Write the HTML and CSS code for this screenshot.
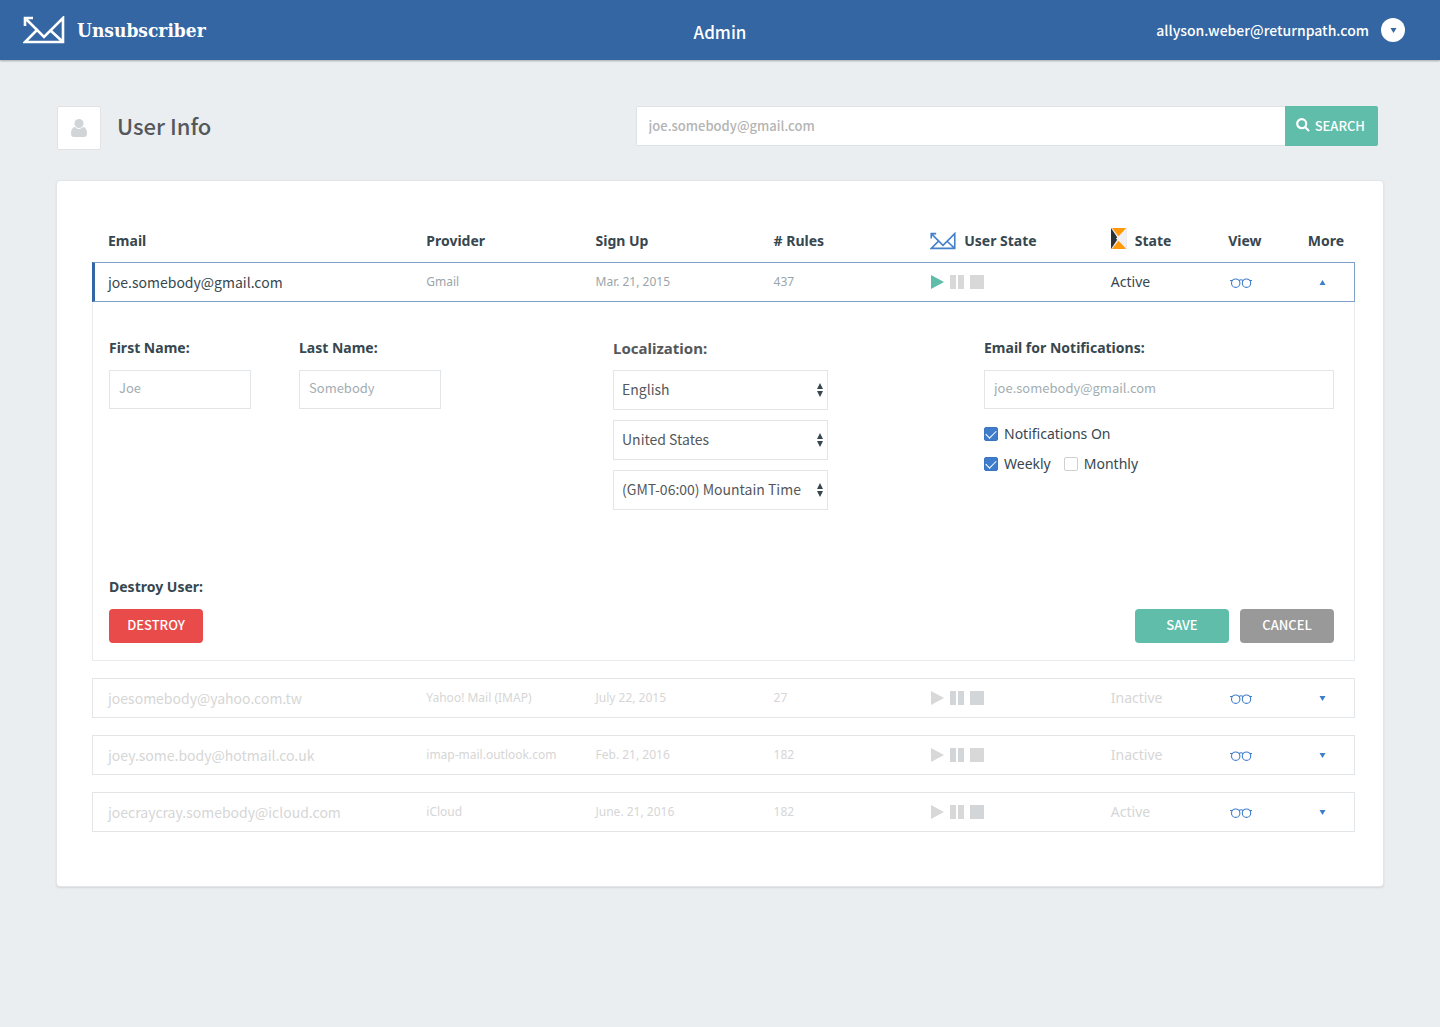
FILE: index.html
```html
<!DOCTYPE html>
<html lang="en">
  <head>
    <meta charset="utf-8">
    <title>Unsubscriber Admin</title>
    <meta name="viewport" content="width=device-width, initial-scale=1">
    <link rel="stylesheet" href="styles.css">
  </head>

  <body>
    <!-- shared icons -->
    <svg class="sprite" aria-hidden="true">
      <symbol id="logo" viewBox="0 0 42 28">
        <path d="M2 10V2h8M2 2l19 19L40 2v24H2l13-13M27 14l13 12" fill="none" stroke="currentColor" stroke-width="2.6"/>
      </symbol>
      <symbol id="play" viewBox="0 0 14 14"><path d="M1 0l13 7-13 7z"/></symbol>
      <symbol id="pause" viewBox="0 0 14 14"><path d="M0 0h6v14H0zM8 0h6v14H8z"/></symbol>
      <symbol id="stop" viewBox="0 0 14 14"><path d="M0 0h14v14H0z"/></symbol>
      <symbol id="glasses" viewBox="0 0 22 10">
        <g fill="none" stroke="currentColor" stroke-width="1.1">
          <circle cx="5.7" cy="5.2" r="4.2"/>
          <circle cx="16.5" cy="5.2" r="4.2"/>
          <path d="M0 2.500h2.500M19.700 2.500H22M9 2.600q2-1.600 4.200 0"/>
        </g>
      </symbol>
      <symbol id="down" viewBox="0 0 6 5"><path d="M0 0h6L3 5z"/></symbol>
      <symbol id="up" viewBox="0 0 6 5"><path d="M0 5h6L3 0z"/></symbol>
      <symbol id="updown" viewBox="0 0 6 14"><path d="M0 6h6L3 0zM0 8h6l-3 6z"/></symbol>
    </svg>

    <header class="topbar">
      <a class="brand" href="#">
        <svg class="brand-logo"><use href="#logo"/></svg>
        <span>Unsubscriber</span>
      </a>
      <div class="topbar-title">Admin</div>
      <div class="account">
        <span>allyson.weber@returnpath.com</span>
        <button class="account-btn" type="button" aria-label="Account menu"><svg class="caret"><use href="#down"/></svg></button>
      </div>
    </header>

    <main class="page">
      <div class="page-head">
        <div class="avatar">
          <svg width="16" height="18" viewBox="0 0 16 18">
            <path d="M4 8q4 4 8 0 4 .5 4 6.500 0 3.500-3 3.500H3q-3 0-3-3.500Q0 8.500 4 8z"/>
            <circle cx="8" cy="4.5" r="4.5"/>
          </svg>
        </div>
        <h1>User Info</h1>
        <form class="search">
          <input type="search" aria-label="Search users" placeholder="joe.somebody@gmail.com">
          <button type="button">
            <svg width="14" height="14" viewBox="0 0 14 14"><g fill="none" stroke="currentColor" stroke-width="2.2"><circle cx="5.7" cy="5.7" r="4.5"/><path d="M9 9l4 4"/></g></svg>
            <span>SEARCH</span>
          </button>
        </form>
      </div>

      <section class="card">
        <table class="users">
          <colgroup>
            <col class="c-email"><col class="c-provider"><col class="c-signup"><col class="c-rules">
            <col class="c-ustate"><col class="c-state"><col class="c-view"><col class="c-more">
          </colgroup>
          <thead>
            <tr>
              <th>Email</th>
              <th>Provider</th>
              <th>Sign Up</th>
              <th># Rules</th>
              <th><span class="th-icon"><svg class="mini-logo"><use href="#logo"/></svg>User State</span></th>
              <th><span class="th-icon"><svg class="k-logo" viewBox="0 0 16 21">
                <path fill="#ecebed" d="M0 0h16v21H0z"/>
                <path fill="#ff9a0c" d="M1 0h14L8 9zM1 21h14l-7-9z"/>
                <path fill="#2b3236" d="M0 0l7 10.500L0 21z"/>
                <path fill="#f1f1f3" d="M15 1v19L5 10.500z"/>
              </svg>State</span></th>
              <th>View</th>
              <th>More</th>
            </tr>
          </thead>
          <tbody>
            <tr class="user open">
              <td class="email">joe.somebody@gmail.com</td>
              <td>Gmail</td>
              <td>Mar. 21, 2015</td>
              <td>437</td>
              <td><div class="controls"><svg class="on"><use href="#play"/></svg><svg><use href="#pause"/></svg><svg><use href="#stop"/></svg></div></td>
              <td class="state">Active</td>
              <td><button class="icon-btn" type="button" aria-label="View"><svg class="glasses"><use href="#glasses"/></svg></button></td>
              <td class="more"><button class="icon-btn" type="button" aria-label="Less"><svg class="caret"><use href="#up"/></svg></button></td>
            </tr>
            <tr class="detail">
              <td colspan="8">
                <form>
                  <div class="fields">
                    <div class="field">
                      <label for="first">First Name:</label>
                      <input class="short" id="first" type="text" placeholder="Joe">
                    </div>
                    <div class="field">
                      <label for="last">Last Name:</label>
                      <input class="short" id="last" type="text" placeholder="Somebody">
                    </div>
                    <div class="field">
                      <label class="loc" for="lang">Localization:</label>
                      <div class="select">
                        <select id="lang"><option>English</option></select>
                        <svg><use href="#updown"/></svg>
                      </div>
                      <div class="select">
                        <select aria-label="Country"><option>United States</option></select>
                        <svg><use href="#updown"/></svg>
                      </div>
                      <div class="select">
                        <select aria-label="Time zone"><option>(GMT-06:00) Mountain Time</option></select>
                        <svg><use href="#updown"/></svg>
                      </div>
                    </div>
                    <div class="field">
                      <label for="notify">Email for Notifications:</label>
                      <input id="notify" type="email" placeholder="joe.somebody@gmail.com">
                      <div class="checks">
                        <label class="check"><input type="checkbox" checked>Notifications On</label>
                      </div>
                      <div class="checks">
                        <label class="check"><input type="checkbox" checked>Weekly</label>
                        <label class="check"><input type="checkbox">Monthly</label>
                      </div>
                    </div>
                  </div>
                  <div class="actions">
                    <div class="destroy">
                      <h2>Destroy User:</h2>
                      <button class="btn red" type="button">DESTROY</button>
                    </div>
                    <button class="btn green" type="button">SAVE</button>
                    <button class="btn grey" type="button">CANCEL</button>
                  </div>
                </form>
              </td>
            </tr>
            <tr class="gap"><td colspan="8"></td></tr>
            <tr class="user">
              <td class="email">joesomebody@yahoo.com.tw</td>
              <td>Yahoo! Mail (IMAP)</td>
              <td>July 22, 2015</td>
              <td>27</td>
              <td><div class="controls"><svg><use href="#play"/></svg><svg class="cool"><use href="#pause"/></svg><svg class="cool"><use href="#stop"/></svg></div></td>
              <td class="state">Inactive</td>
              <td><button class="icon-btn" type="button" aria-label="View"><svg class="glasses"><use href="#glasses"/></svg></button></td>
              <td class="more"><button class="icon-btn" type="button" aria-label="More"><svg class="caret"><use href="#down"/></svg></button></td>
            </tr>
            <tr class="gap"><td colspan="8"></td></tr>
            <tr class="user">
              <td class="email">joey.some.body@hotmail.co.uk</td>
              <td>imap-mail.outlook.com</td>
              <td>Feb. 21, 2016</td>
              <td>182</td>
              <td><div class="controls"><svg><use href="#play"/></svg><svg class="cool"><use href="#pause"/></svg><svg><use href="#stop"/></svg></div></td>
              <td class="state">Inactive</td>
              <td><button class="icon-btn" type="button" aria-label="View"><svg class="glasses"><use href="#glasses"/></svg></button></td>
              <td class="more"><button class="icon-btn" type="button" aria-label="More"><svg class="caret"><use href="#down"/></svg></button></td>
            </tr>
            <tr class="gap"><td colspan="8"></td></tr>
            <tr class="user">
              <td class="email">joecraycray.somebody@icloud.com</td>
              <td>iCloud</td>
              <td>June. 21, 2016</td>
              <td>182</td>
              <td><div class="controls"><svg><use href="#play"/></svg><svg><use href="#pause"/></svg><svg class="cool"><use href="#stop"/></svg></div></td>
              <td class="state">Active</td>
              <td><button class="icon-btn" type="button" aria-label="View"><svg class="glasses"><use href="#glasses"/></svg></button></td>
              <td class="more"><button class="icon-btn" type="button" aria-label="More"><svg class="caret"><use href="#down"/></svg></button></td>
            </tr>
          </tbody>
        </table>
      </section>
    </main>
  </body>
</html>
```

FILE: styles.css
```css
* {
  box-sizing: border-box;
}

body {
  margin: 0;
  background: #eaeef1;
  color: #37474f;
  font-family: "Noto Sans", sans-serif;
  font-size: 14px;
  line-height: 20px;
}

button, input, select {
  font-family: "Noto Sans CJK SC", sans-serif;
  margin: 0;
}

button {
  border: none;
  cursor: pointer;
}

.sprite {
  display: none;
}

/* ---------- Top bar */
.topbar {
  display: grid;
  grid-template-columns: 1fr auto 1fr;
  align-items: center;
  height: 60px;
  padding: 0 35px 0 23px;
  background: #3366a2;
  box-shadow: 0 1px 2px rgba(0, 0, 0, 0.3);
  color: #fff;
  font-family: "Noto Sans CJK SC", sans-serif;
  font-weight: 500;
}

.brand {
  display: flex;
  align-items: center;
  gap: 12px;
  color: #fff;
  font-family: "DejaVu Serif Condensed", "DejaVu Serif", serif;
  font-size: 19px;
  font-weight: bold;
  text-decoration: none;
}

.brand-logo {
  width: 42px;
  height: 28px;
}

.topbar-title {
  padding: 4px 0 0 12px;
  font-size: 17px;
}

.account {
  display: flex;
  justify-content: flex-end;
  align-items: center;
  gap: 12px;
}

.account-btn {
  display: flex;
  justify-content: center;
  align-items: center;
  width: 24px;
  height: 24px;
  padding: 0;
  border-radius: 50%;
  background: #fff;
  color: #3366a2;
}

.caret {
  width: 7px;
  height: 5px;
  fill: currentColor;
}

/* ---------- Page head */
.page {
  padding: 46px 56px 56px;
}

.page-head {
  display: flex;
  align-items: flex-start;
  padding: 0 6px 0 1px;
  margin-bottom: 30px;
}

.avatar {
  display: flex;
  justify-content: center;
  align-items: center;
  width: 44px;
  height: 44px;
  border: 1px solid #dfe3e6;
  border-radius: 2px;
  background: #fff;
  fill: #d1d5d8;
}

h1 {
  flex: 1;
  margin: 0 0 0 16px;
  color: #54585b;
  font-family: "Noto Sans CJK SC", sans-serif;
  font-size: 22px;
  font-weight: 500;
  line-height: 38px;
}

.search {
  display: flex;
  width: 56.2%;
  height: 40px;
}

.search input {
  flex: 1;
  min-width: 0;
  padding: 0 12px 2px;
  border: 1px solid #dfe3e6;
  border-right: none;
  border-radius: 2px 0 0 2px;
  background: #fff;
  font-size: 13px;
  font-weight: 500;
  outline: none;
}

.search input::placeholder {
  color: #b4b4b4;
}

.search button {
  display: flex;
  align-items: center;
  gap: 5px;
  padding: 0 13px 2px 11px;
  border-radius: 0 2px 2px 0;
  background: #5fbdaa;
  color: #fff;
  font-size: 13px;
  font-weight: 500;
}

/* ---------- Card and table */
.card {
  padding: 47px 28px 54px 35px;
  border: 1px solid #e2e6e9;
  border-radius: 4px;
  background: #fff;
  box-shadow: 0 1px 2px rgba(0, 0, 0, 0.1);
}

.users {
  width: 100%;
  table-layout: fixed;
  border-collapse: separate;
  border-spacing: 0;
}

.c-email { width: 25.2%; }
.c-provider { width: 13.4%; }
.c-signup { width: 14.1%; }
.c-rules { width: 12.4%; }
.c-ustate { width: 14.3%; }
.c-state { width: 9.3%; }
.c-view { width: 6.3%; }
.c-more { width: 5%; }

th {
  height: 34px;
  padding: 0 0 8px 16px;
  font-weight: bold;
  text-align: left;
  white-space: nowrap;
}

.th-icon {
  display: flex;
  align-items: center;
  gap: 8px;
}

.mini-logo {
  width: 26px;
  height: 18px;
  color: #4480cc;
}

.k-logo {
  width: 16px;
  height: 21px;
  margin-bottom: 5px;
}

.user td {
  height: 40px;
  padding: 0 0 0 16px;
  border: solid #e2e6e8;
  border-width: 1px 0;
  color: #d6d6d6;
  font-size: 12px;
  white-space: nowrap;
}

.user td:first-child {
  border-left-width: 1px;
  padding-left: 15px;
}

.user td:last-child {
  border-right-width: 1px;
}

.user .email {
  font-family: "Noto Sans CJK SC", sans-serif;
  font-size: 14px;
}

.user .state {
  font-size: 14px;
}

.user .more {
  padding: 0;
  text-align: center;
}

.open td {
  border-color: #7ea0c8;
  color: #9aa5aa;
}

.open td:first-child {
  padding-left: 13px;
  border-left: 3px solid #3366a2;
}

.open .email, .open .state {
  color: #37474f;
}

.controls {
  display: flex;
  gap: 6px;
}

.controls svg {
  width: 14px;
  height: 14px;
  fill: #d8d8d8;
}

.controls .on {
  fill: #5fbdaa;
}

.controls .cool {
  fill: #d2d6d9;
}

.icon-btn {
  display: inline-block;
  padding: 2px;
  background: none;
  color: #3f7dcc;
  line-height: 0;
  vertical-align: middle;
}

.glasses {
  width: 22px;
  height: 10px;
}

.gap td {
  height: 17px;
  padding: 0;
}

/* ---------- Expanded user */
.detail td {
  padding: 36px 20px 17px 16px;
  border: 1px solid #e9ecee;
  border-top: none;
}

.fields {
  display: grid;
  grid-template-columns: 190fr 314fr 371fr 350fr;
  min-height: 239px;
}

.field > label, h2 {
  display: block;
  margin: 0 0 12px;
  font-size: 14px;
  font-weight: bold;
  line-height: 20px;
}

.field .loc {
  color: #54585b;
  font-size: 15px;
}

.field > input {
  width: 100%;
  height: 39px;
  padding: 0 9px 4px;
  border: 1px solid #e2e6e8;
  background: #fff;
  font-size: 13px;
  outline: none;
}

.field > .short {
  width: 142px;
}

.field > input::placeholder {
  color: #a3adb1;
}

.select {
  position: relative;
  width: 215px;
  margin-bottom: 10px;
}

.select select {
  display: block;
  width: 100%;
  height: 40px;
  padding: 0 8px 2px;
  border: 1px solid #e2e6e8;
  border-radius: 0;
  background: #fff;
  color: #54585b;
  font-size: 14px;
  -webkit-appearance: none;
  appearance: none;
}

.select svg {
  position: absolute;
  top: 13px;
  right: 5px;
  width: 6px;
  height: 14px;
  fill: #37474f;
  pointer-events: none;
}

.checks {
  display: flex;
  gap: 13px;
  margin-top: 10px;
}

.field .checks:first-of-type {
  margin-top: 15px;
}

.check {
  display: flex;
  align-items: center;
  gap: 6px;
}

.check input {
  display: grid;
  place-items: center;
  width: 14px;
  height: 14px;
  border: 1px solid #d0d0d0;
  border-radius: 2px;
  background: #fff;
  -webkit-appearance: none;
  appearance: none;
}

.check input:checked {
  border-color: #3a75c0;
  background: #3f7dcc;
}

/* tick mark */
.check input:checked::before {
  content: "";
  width: 9px;
  height: 5px;
  margin-bottom: 3px;
  border: solid #fff;
  border-width: 0 0 1px 1px;
  transform: rotate(-45deg);
}

.actions {
  display: flex;
  align-items: flex-end;
  gap: 11px;
}

.destroy {
  flex: 1;
}

.btn {
  width: 94px;
  height: 34px;
  padding: 0 0 3px;
  border-radius: 4px;
  color: #fff;
  font-size: 13px;
  font-weight: 500;
}

.red { background: #e94b4b; }
.green { background: #5fbdaa; }
.grey { background: #999; }
```
